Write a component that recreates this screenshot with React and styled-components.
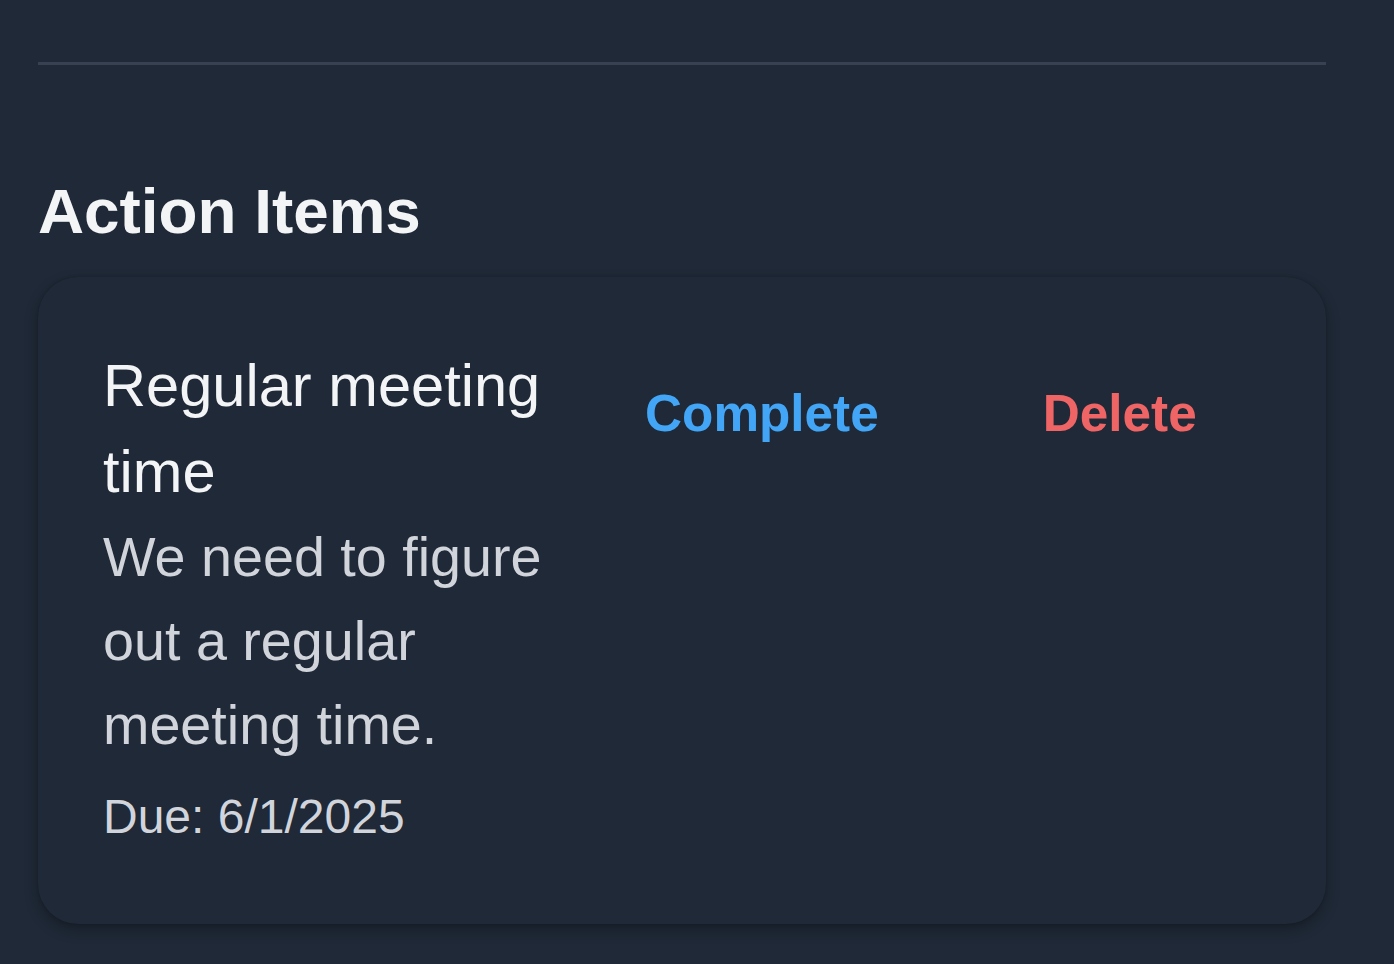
import React from "react";
import styled, { createGlobalStyle } from "styled-components";

const Global = createGlobalStyle`
  html, body {
    margin: 0;
    padding: 0;
    background: #1f2937;
  }
  body {
    font-family: "Liberation Sans", Arial, Helvetica, sans-serif;
    color: #f3f4f6;
    min-height: 964px;
    overflow: hidden;
  }
`;

const Page = styled.main`
  padding: 62px 68px 0 38px;
  display: flex;
  flex-direction: column;
`;

const Divider = styled.hr`
  margin: 0;
  border: none;
  height: 3px;
  background: #374151;
`;

const Heading = styled.h2`
  margin: 102px 0 22px;
  font-size: 63.8px;
  line-height: 88px;
  font-weight: 700;
  color: #f3f4f6;
`;

const Card = styled.section`
  background: #1f2937;
  border-radius: 40px;
  box-shadow: 0 6px 14px rgba(0, 0, 0, 0.28), 0 0 3px rgba(0, 0, 0, 0.18);
  padding: 66px 65px 71px;
  display: flex;
  align-items: flex-start;
`;

const TextCol = styled.div`
  width: 500px;
  display: flex;
  flex-direction: column;
`;

const Title = styled.div`
  font-size: 59.6px;
  line-height: 86px;
  color: #f3f4f6;
`;

const Desc = styled.div`
  font-size: 55.7px;
  line-height: 84px;
  color: #d1d5db;
`;

const Due = styled.div`
  margin-top: 14px;
  font-size: 48px;
  line-height: 72px;
  color: #d1d5db;
`;

const Actions = styled.div`
  display: flex;
  gap: 80px;
`;

const ActionButton = styled.button`
  background: none;
  border: none;
  padding: 35px 42px 28px;
  font-family: inherit;
  font-size: 51.3px;
  line-height: 72px;
  font-weight: 700;
  color: ${(p) => (p.$variant === "danger" ? "#ef6464" : "#42a5f5")};
  cursor: pointer;
`;

export default function App() {
  return (
    <>
      <Global />
      <Page>
        <Divider />
        <Heading>Action Items</Heading>
        <Card>
          <TextCol>
            <Title>Regular meeting time</Title>
            <Desc>We need to figure out a regular meeting time.</Desc>
            <Due>Due: 6/1/2025</Due>
          </TextCol>
          <Actions>
            <ActionButton>Complete</ActionButton>
            <ActionButton $variant="danger">Delete</ActionButton>
          </Actions>
        </Card>
      </Page>
    </>
  );
}
